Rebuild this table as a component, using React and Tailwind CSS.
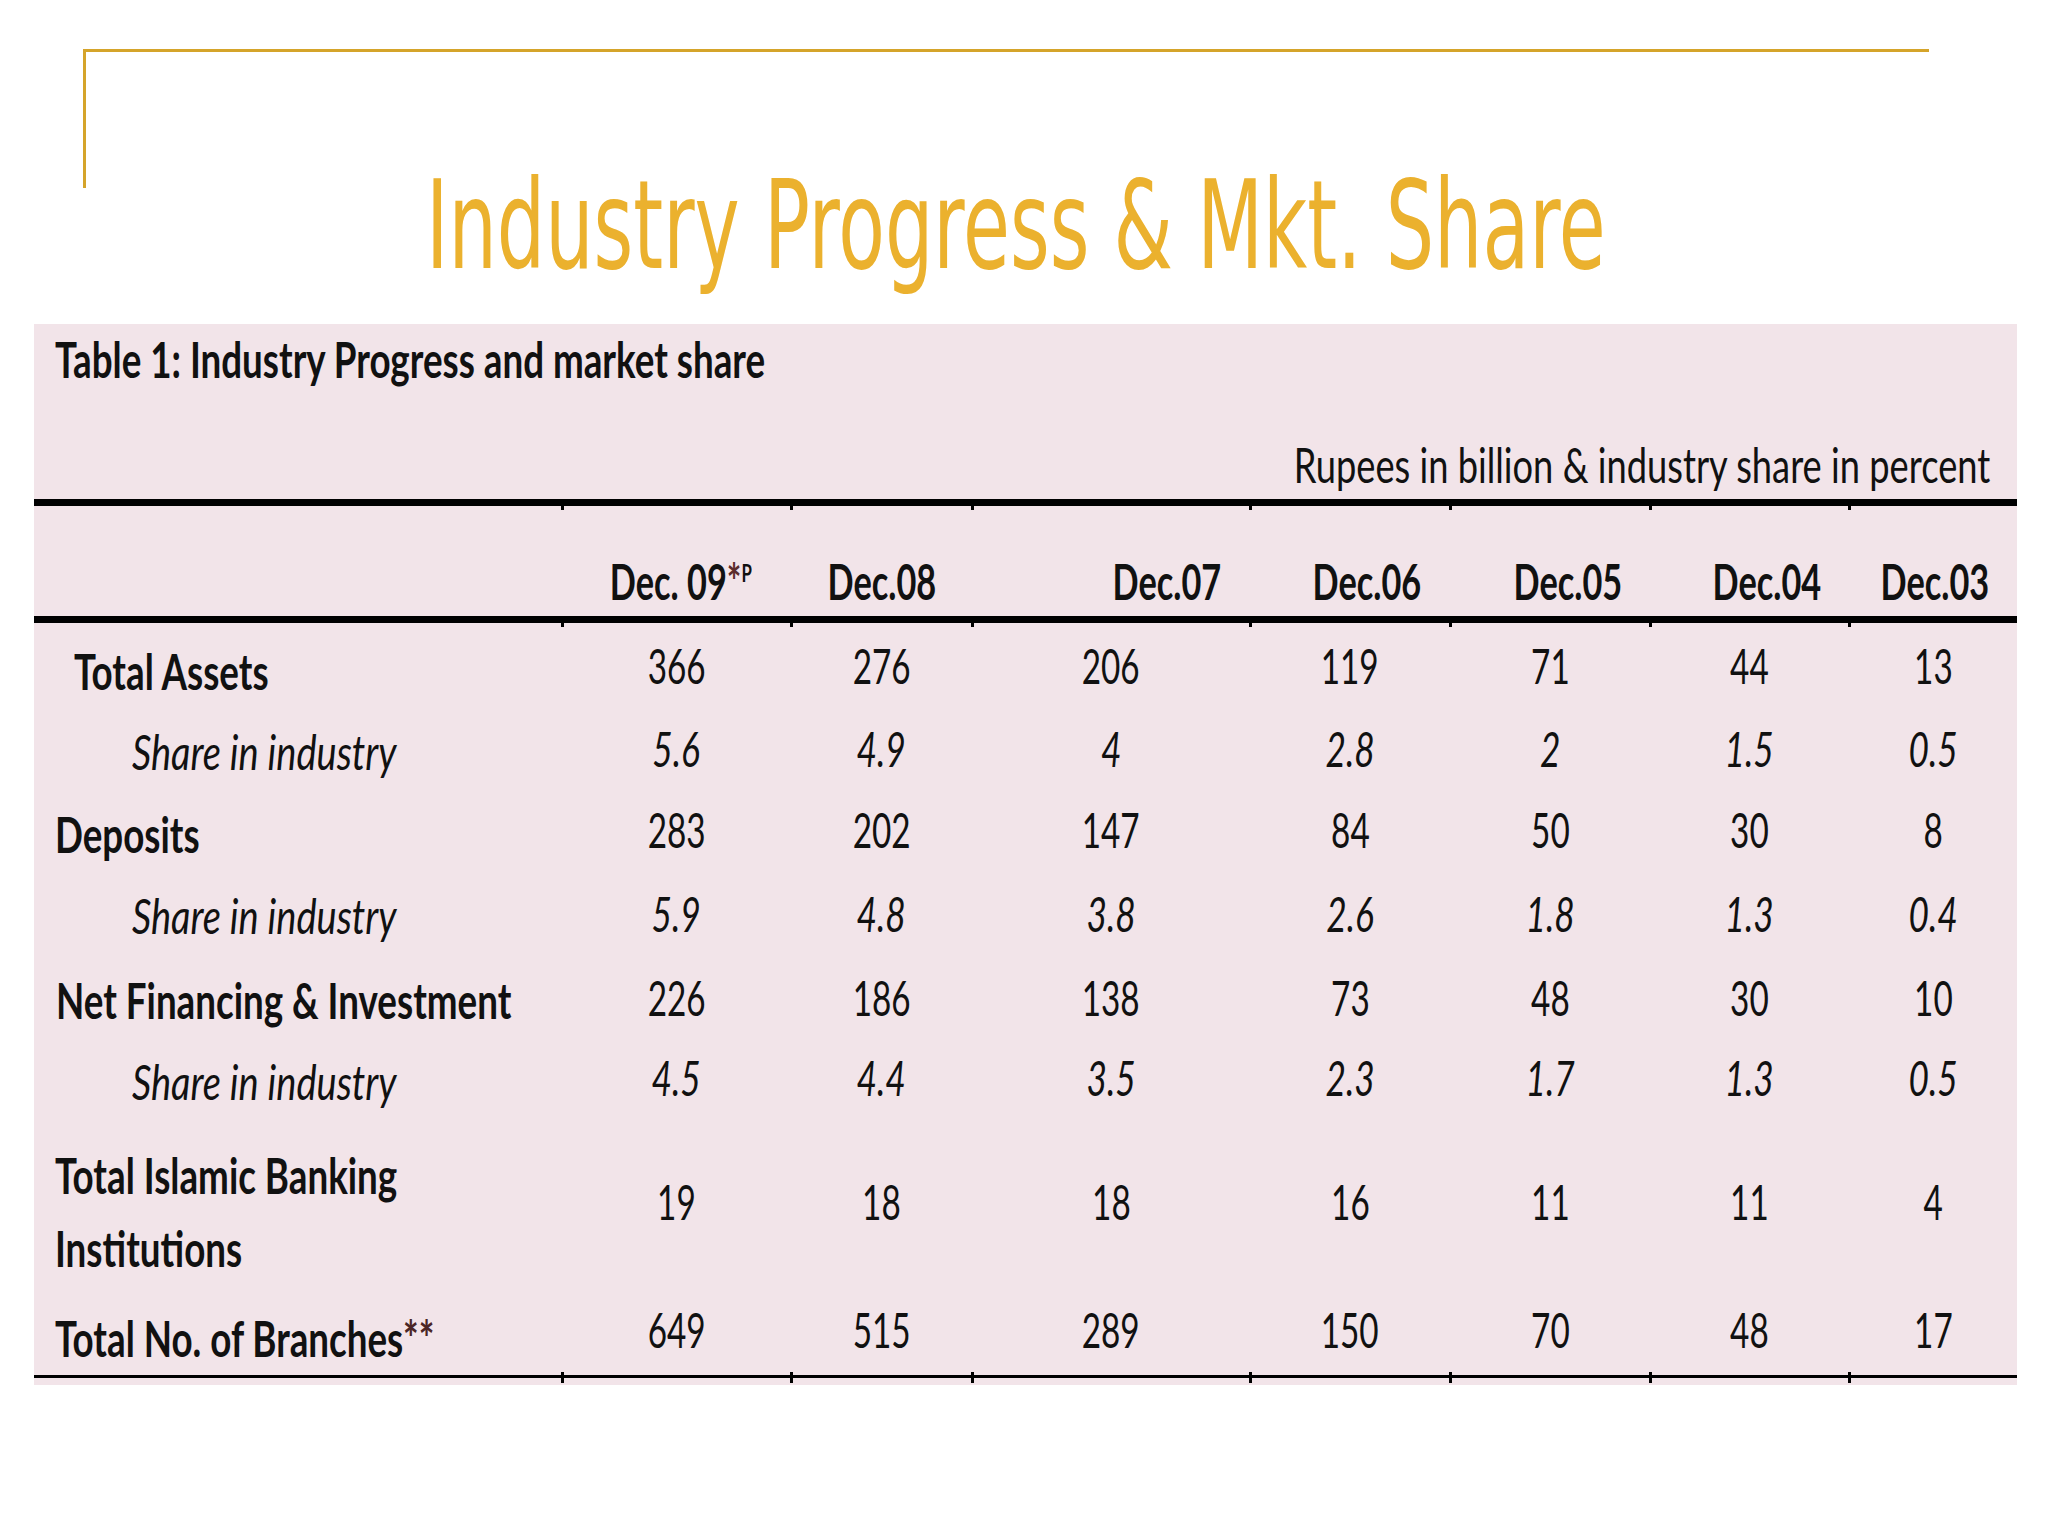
import React from "react";

// squeezed text: the reference renders Calibri-like text narrow and tall
function Sq({ children, align = "left", sx = "scale-x-[0.75]" }) {
  const origin =
    align === "right" ? "origin-right" : align === "center" ? "origin-center" : "origin-left";
  return <span className={`inline-block shrink-0 ${sx} ${origin}`}>{children}</span>;
}

const gridCols = "grid grid-cols-[528px_229px_181px_278px_200px_200px_199px_168px]";

const headers = [
  { label: "Dec. 09", star: true, pr: "pr-[39px]" },
  { label: "Dec.08", pr: "pr-[36px]" },
  { label: "Dec.07", pr: "pr-[29px]" },
  { label: "Dec.06", pr: "pr-[29px]" },
  { label: "Dec.05", pr: "pr-[28px]" },
  { label: "Dec.04", pr: "pr-[28px]" },
  { label: "Dec.03", pr: "pr-[28px]" },
];

const rows = [
  { label: "Total Assets", kind: "bold", indent: "pl-[40px]", values: ["366", "276", "206", "119", "71", "44", "13"], h: "h-[79px]", np: "pt-[14px]", lp: "pt-[20px]" },
  { label: "Share in industry", kind: "italic", indent: "pl-[98px]", values: ["5.6", "4.9", "4", "2.8", "2", "1.5", "0.5"], h: "h-[82px]", np: "pt-[18px]", lp: "pt-[21px]" },
  { label: "Deposits", kind: "bold", indent: "pl-[21px]", values: ["283", "202", "147", "84", "50", "30", "8"], h: "h-[83px]", np: "pt-[17px]", lp: "pt-[22px]" },
  { label: "Share in industry", kind: "italic", indent: "pl-[98px]", values: ["5.9", "4.8", "3.8", "2.6", "1.8", "1.3", "0.4"], h: "h-[84px]", np: "pt-[18px]", lp: "pt-[20px]" },
  { label: "Net Financing & Investment", kind: "bold", indent: "pl-[22px]", values: ["226", "186", "138", "73", "48", "30", "10"], h: "h-[82px]", np: "pt-[18px]", lp: "pt-[21px]" },
  { label: "Share in industry", kind: "italic", indent: "pl-[98px]", values: ["4.5", "4.4", "3.5", "2.3", "1.7", "1.3", "0.5"], h: "h-[80px]", np: "pt-[16px]", lp: "pt-[20px]" },
  { label: "Total Islamic Banking", label2: "Institutions", kind: "bold", indent: "pl-[21px]", values: ["19", "18", "18", "16", "11", "11", "4"], h: "h-[160px]", np: "pt-[60px]", lp: "pt-[34px]" },
  { label: "Total No. of Branches", stars: true, kind: "bold", indent: "pl-[21px]", values: ["649", "515", "289", "150", "70", "48", "17"], h: "h-[95px]", np: "pt-[28px]", lp: "pt-[37px]" },
];

function Ticks({ h }) {
  return (
    <div className={`${gridCols} ${h}`}>
      <div />
      {headers.map((c) => (
        <div key={c.label}>
          <div className="w-[3px] h-full -ml-[1px] bg-black" />
        </div>
      ))}
    </div>
  );
}

export default function App() {
  return (
    <div className="w-[2048px] h-[1536px] bg-white overflow-hidden">
      <div className="pt-[49px] pl-[83px]">
        <div className="w-[1846px] h-[139px] border-t-[3px] border-l-[3px] border-[#d5a42a]">
          <div className="pt-[112px] pl-[340px] font-['DejaVu_Sans',sans-serif] text-[123px] leading-[123px] text-[#ebb12e] whitespace-nowrap">
            <span className="inline-block scale-x-[0.62] origin-left">Industry Progress &amp; Mkt. Share</span>
          </div>
        </div>
      </div>

      <div className="mt-[136px] ml-[34px] w-[1983px] bg-[#f2e4e9] pb-[2px] font-[Lato,sans-serif] text-[49px] leading-[49px] text-[#111111]">
        <div className="pt-[11px] pl-[21px] font-bold whitespace-nowrap">
          <Sq>Table 1: Industry Progress and market share</Sq>
        </div>
        <div className="mt-[56px] pr-[27px] text-right whitespace-nowrap">
          <Sq align="right" sx="scale-x-[0.74]">Rupees in billion &amp; industry share in percent</Sq>
        </div>

        <div className="mt-[10px] h-[7px] bg-black" />
        <Ticks h="h-[4px]" />
        <div className={`${gridCols} h-[106px] font-bold`}>
          <div />
          {headers.map((c) => (
            <div key={c.label} className={`flex justify-end items-start pt-[47px] whitespace-nowrap ${c.pr}`}>
              <Sq align="right" sx="scale-x-[0.7]">
                {c.label}
                {c.star && (
                  <>
                    <span className="text-[#5b2c2c]">*</span>
                    <span className="align-[18px] text-[24px] leading-none">P</span>
                  </>
                )}
              </Sq>
            </div>
          ))}
        </div>
        <div className="h-[7px] bg-black" />
        <Ticks h="h-[4px]" />

        {rows.map((r, i) => (
          <div key={i} className={`${gridCols} ${r.h}`}>
            <div
              className={`${r.indent} ${r.lp} whitespace-nowrap ${
                r.kind === "bold" ? "font-bold" : "italic"
              } ${r.label2 ? "leading-[73px] -mt-[12px]" : ""}`}
            >
              <Sq sx={r.kind === "bold" ? "scale-x-[0.75]" : "scale-x-[0.775]"}>
                {r.label}
                {r.stars && <span className="text-[#4b2626]">**</span>}
                {r.label2 && (
                  <>
                    <br />
                    {r.label2}
                  </>
                )}
              </Sq>
            </div>
            {r.values.map((v, j) => (
              <div key={j} className={`flex justify-center ${r.np} ${r.kind === "italic" ? "italic" : ""}`}>
                <Sq align="center" sx={r.kind === "italic" ? "scale-x-[0.72]" : "scale-x-[0.68]"}>
                  {v}
                </Sq>
              </div>
            ))}
          </div>
        ))}

        <Ticks h="h-[3px]" />
        <div className="h-[3px] bg-black" />
        <Ticks h="h-[5px]" />
      </div>
    </div>
  );
}
